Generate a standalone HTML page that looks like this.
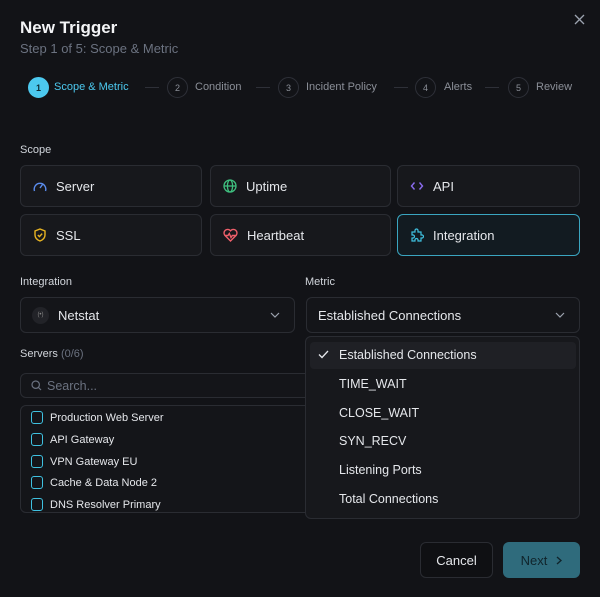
<!DOCTYPE html>
<html><head><meta charset="utf-8"><style>
*{box-sizing:border-box;margin:0;padding:0}
body{width:600px;height:597px;background:#121317;font-family:"Liberation Sans",sans-serif;color:#e5e7eb;position:relative;overflow:hidden}
.a{position:absolute;white-space:nowrap}
.t{font-size:17px;font-weight:bold;color:#f3f4f6;left:20px;top:18px}
.s{font-size:13px;color:#6b7280;left:20px;top:41px}
.c{width:21px;height:21px;border-radius:50%;border:1px solid #2e3038;font-size:9px;color:#8b8f98;display:flex;align-items:center;justify-content:center}
.sl{font-size:11px;color:#8b8f98;top:81px}
.ln{height:1px;width:14px;background:#2e3038;top:87px}
.lb{font-size:11px;color:#d1d5db}
.card{position:absolute;height:42px;border:1px solid #2a2c32;border-radius:6px;background:#17181c;display:flex;align-items:center;padding-left:12px;font-size:13px;color:#e5e7eb}
.card svg{margin-right:9px}
.sel{position:absolute;height:36px;border:1px solid #2a2c32;border-radius:6px;background:#141519;display:flex;align-items:center;font-size:13px;color:#e5e7eb}
.row{position:absolute;left:31px;font-size:11px;color:#e5e7eb;display:flex;align-items:center}
.cb{width:12px;height:13px;border:1.5px solid #3fc1e0;border-radius:3px;margin-right:7px}
.dd{position:absolute;left:305px;top:336px;width:275px;height:183px;background:#17181c;border:1px solid #2a2c32;border-radius:6px}
.it{position:absolute;left:33px;font-size:12.5px;color:#e5e7eb}
</style></head><body>
<div class="a t">New Trigger</div>
<div class="a s">Step 1 of 5: Scope &amp; Metric</div>
<svg class="a" style="left:574px;top:14px" width="11" height="11" viewBox="0 0 11 11"><path d="M1 1L10 10M10 1L1 10" stroke="#9ca3af" stroke-width="1.3"/></svg>

<div class="a c" style="left:28px;top:77px;background:#4cc9ef;border-color:#4cc9ef;color:#0d2a33;font-weight:bold">1</div>
<div class="a sl" style="left:54px;color:#4cc9ef">Scope &amp; Metric</div>
<div class="a ln" style="left:145px"></div>
<div class="a c" style="left:167px;top:77px">2</div>
<div class="a sl" style="left:195px">Condition</div>
<div class="a ln" style="left:256px"></div>
<div class="a c" style="left:278px;top:77px">3</div>
<div class="a sl" style="left:306px">Incident Policy</div>
<div class="a ln" style="left:394px"></div>
<div class="a c" style="left:415px;top:77px">4</div>
<div class="a sl" style="left:444px">Alerts</div>
<div class="a ln" style="left:485px"></div>
<div class="a c" style="left:508px;top:77px">5</div>
<div class="a sl" style="left:536px">Review</div>

<div class="a lb" style="left:20px;top:144px">Scope</div>
<div class="card" style="left:20px;top:165px;width:182px"><svg width="14" height="14" viewBox="0 0 14 14" fill="none" stroke="#5b8def" stroke-width="1.4"><path d="M1.5 12A5.8 5.8 0 1 1 12.5 12"/><path d="M7 9L9.5 5.5"/></svg>Server</div>
<div class="card" style="left:210px;top:165px;width:181px"><svg width="14" height="14" viewBox="0 0 14 14" fill="none" stroke="#3fbf7f" stroke-width="1.3"><circle cx="7" cy="7" r="6"/><ellipse cx="7" cy="7" rx="2.6" ry="6"/><path d="M1 7H13"/></svg>Uptime</div>
<div class="card" style="left:397px;top:165px;width:183px"><svg width="14" height="14" viewBox="0 0 14 14" fill="none" stroke="#8b6cf0" stroke-width="1.4"><path d="M4.5 3.5L1.5 7L4.5 10.5M9.5 3.5L12.5 7L9.5 10.5"/></svg>API</div>
<div class="card" style="left:20px;top:214px;width:182px"><svg width="14" height="14" viewBox="0 0 14 14" fill="none" stroke="#e8b422" stroke-width="1.4"><path d="M7 1L12 3V7C12 10 9.5 12 7 13C4.5 12 2 10 2 7V3Z"/><path d="M4.8 7L6.4 8.6L9.2 5.6"/></svg>SSL</div>
<div class="card" style="left:210px;top:214px;width:181px"><svg width="15" height="14" viewBox="0 0 15 14" fill="none" stroke="#ef5f6a" stroke-width="1.4"><path d="M7.5 13L1.8 7.3A3.5 3.5 0 0 1 7.5 2.8A3.5 3.5 0 0 1 13.2 7.3Z"/><path d="M2 7.5H5L6.3 5.5L8 9.5L9.3 7.5H13"/></svg>Heartbeat</div>
<div class="card" style="left:397px;top:214px;width:183px;border-color:#3aa5c0;background:#121b21"><svg width="14" height="14" viewBox="0 0 14 14" fill="none" stroke="#3fc1e0" stroke-width="1.2"><path d="M5 2.5A1.5 1.5 0 0 1 8 2.5V4H11V7H12A1.5 1.5 0 0 1 12 10H11V13H8V12A1.5 1.5 0 0 0 5 12V13H2V10H3A1.5 1.5 0 0 0 3 7H2V4H5Z"/></svg>Integration</div>

<div class="a lb" style="left:20px;top:276px">Integration</div>
<div class="a lb" style="left:305px;top:276px">Metric</div>
<div class="sel" style="left:20px;top:297px;width:275px;padding-left:11px"><div style="width:17px;height:17px;border-radius:50%;background:#222328;display:flex;align-items:center;justify-content:center;font-size:6px;color:#888;margin-right:9px">(•)</div>Netstat<svg class="a" style="right:14px;top:14px" width="10" height="6"><path d="M1 1L5 5L9 1" stroke="#9ca3af" fill="none" stroke-width="1.2"/></svg></div>
<div class="sel" style="left:306px;top:297px;width:274px;padding-left:11px">Established Connections<svg class="a" style="right:14px;top:14px" width="10" height="6"><path d="M1 1L5 5L9 1" stroke="#9ca3af" fill="none" stroke-width="1.2"/></svg></div>

<div class="a lb" style="left:20px;top:348px">Servers <span style="color:#6b7280">(0/6)</span></div>
<div class="sel" style="left:20px;top:373px;width:300px;height:25px;padding-left:10px;font-size:12.5px;color:#6b7280"><svg width="11" height="11" viewBox="0 0 11 11" fill="none" stroke="#6b7280" stroke-width="1.2" style="margin-right:5px"><circle cx="4.7" cy="4.7" r="3.7"/><path d="M7.5 7.5L10 10"/></svg>Search...</div>
<div class="sel" style="left:20px;top:405px;width:300px;height:108px"></div>
<div class="row" style="top:411px"><div class="cb"></div>Production Web Server</div>
<div class="row" style="top:433px"><div class="cb"></div>API Gateway</div>
<div class="row" style="top:455px"><div class="cb"></div>VPN Gateway EU</div>
<div class="row" style="top:476px"><div class="cb"></div>Cache &amp; Data Node 2</div>
<div class="row" style="top:498px"><div class="cb"></div>DNS Resolver Primary</div>

<div class="dd">
<div class="a" style="left:4px;top:5px;width:266px;height:27px;background:#1f2025;border-radius:4px"></div>
<svg class="a" style="left:12px;top:13px" width="11" height="9"><path d="M1 4.5L4 7.5L10 1" stroke="#e5e7eb" fill="none" stroke-width="1.3"/></svg>
<div class="it" style="top:11px">Established Connections</div>
<div class="it" style="top:40px">TIME_WAIT</div>
<div class="it" style="top:69px">CLOSE_WAIT</div>
<div class="it" style="top:97px">SYN_RECV</div>
<div class="it" style="top:126px">Listening Ports</div>
<div class="it" style="top:155px">Total Connections</div>
</div>

<div class="a" style="left:420px;top:542px;width:73px;height:36px;border:1px solid #2a2c32;border-radius:6px;background:#0f1013;display:flex;align-items:center;justify-content:center;font-size:13px;color:#e5e7eb">Cancel</div>
<div class="a" style="left:503px;top:542px;width:77px;height:36px;border-radius:6px;background:#2f6b7c;display:flex;align-items:center;justify-content:center;font-size:13px;color:#10242b">Next<svg width="6" height="9" style="margin-left:9px"><path d="M1 1L5 4.5L1 8" stroke="#10242b" fill="none" stroke-width="1.4"/></svg></div>
</body></html>
